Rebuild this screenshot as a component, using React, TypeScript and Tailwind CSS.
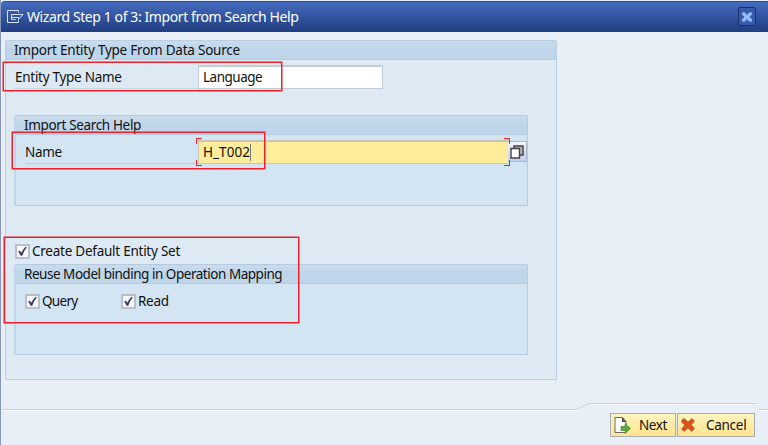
import React from "react";

function Check({ label, className = "" }: { label: string; className?: string }) {
  return (
    <label className={`flex h-[16px] items-center ${className}`}>
      <span className="mr-[2px] flex h-[15px] w-[15px] shrink-0 items-center justify-center border-2 border-[#b9c0c9] bg-[#f7f7fb]">
        <svg width="11" height="11" viewBox="0 0 11 11" className="shrink-0">
          <path d="M1.2 5.4 L3 4.8 L4.3 6.8 Q6 3 8.7 .8 L9.7 1.6 Q6.7 5 5.2 9.8 H3.6 Q2.5 7 1.2 5.4Z" fill="#3a3a5c" />
        </svg>
      </span>
      <span className="whitespace-nowrap">{label}</span>
    </label>
  );
}

function Group({ title, className = "", titleClass = "", children }: { title: string; className?: string; titleClass?: string; children: React.ReactNode }) {
  return (
    <section className={`ml-[8px] flex w-[514px] flex-col rounded-t-[2px] border border-l-2 border-[#b6cbe0] border-l-[#c3d5eb] bg-[#d3e5f3] ${className}`}>
      <h2 className={`flex h-[19px] shrink-0 items-center border-b border-[#b4cbe1] bg-linear-to-b from-[#cbdcec] to-[#bfd6ea] to-40% pl-[8px] ${titleClass}`}>{title}</h2>
      {children}
    </section>
  );
}

export default function App() {
  return (
    <div className="relative flex h-[445px] w-[768px] flex-col overflow-hidden border-l border-[#8796bc] bg-[#e8eff7] font-['Noto_Sans',sans-serif] text-[13.5px] leading-[18px] tracking-[-0.28px] text-[#111]">
      <header className="mt-px flex h-[31px] shrink-0 items-center rounded-tl-[4px] border-t border-b border-t-[#2c4c91] border-b-[#233e7a] bg-linear-to-b from-[#456cc0] to-[#213f82] pl-[6px] text-white">
        <svg width="17" height="13" viewBox="0 0 17 13" fill="none" stroke="#dbe4fa" strokeWidth="1">
          <path d="M11.5 2.5V.5H.5v12h11v-2M11.5 4.5H16L11.5 9.5V7.5H4.5M11.5 4.5H4.5v5h4" />
        </svg>
        <h1 className="ml-[3px] text-[14px] tracking-[-0.41px] whitespace-nowrap">Wizard Step 1 of 3: Import from Search Help</h1>
        <button className="mr-[12px] ml-auto flex h-[19px] w-[18px] items-center justify-center rounded-[2px] border border-[#183269] bg-[#365ca9]">
          <svg width="10" height="10" viewBox="0 0 10 10"><path d="M0 .5h3l2 2.5 2-2.5h3v2L7.5 5 10 7.5v2H7L5 7 3 9.5H0v-2L2.5 5 0 2.5Z" fill="#96bcff" /></svg>
        </button>
      </header>
      <main className="mt-[8px] ml-[4px] flex h-[340px] w-[552px] shrink-0 flex-col rounded-t-[2px] border border-[#b8cee2] bg-[#deeaf3]">
        <h2 className="flex h-[19px] shrink-0 items-center border-b border-[#b5cce3] bg-linear-to-b from-[#cbdcec] to-[#bfd6ea] to-40% pl-[8px] tracking-[-0.23px]">Import Entity Type From Data Source</h2>
        <div className="mt-[5px] flex h-[24px] shrink-0">
          <span className="ml-[9px] flex w-[183px] items-center border-b border-[#ccd9e5]">Entity Type Name</span>
          <span className="flex w-[185px] items-center border border-t-2 border-[#c2ccd5] bg-white pb-px pl-[4px] tracking-[-0.5px]">Language</span>
        </div>
        <Group title="Import Search Help" titleClass="tracking-[-0.35px]" className="mt-[26px] h-[91px] shrink-0">
          <div className="mt-[5px] flex h-[24px] shrink-0">
            <span className="ml-[9px] flex w-[173px] items-center border-b border-[#bccddd]">Name</span>
            <span className="relative flex w-[310px] items-center border-t-2 border-b border-l border-[#c6c6b7] bg-[#ffed9b] pb-px pl-[4px] tracking-[0.05px]">
              H_T002<i className="h-[17px] w-px bg-[#777]" />
              <i className="absolute -top-[4px] -left-[3px] h-[6px] w-[6px] border-t border-l border-[#ec2028]" />
              <i className="absolute -bottom-[3px] -left-[3px] h-[6px] w-[6px] border-b border-l border-[#ec2028]" />
              <i className="absolute -top-[4px] -right-[2px] z-10 h-[6px] w-[6px] border-t border-r border-[#ec2028]" />
              <i className="absolute -right-[2px] -bottom-[3px] z-10 h-[6px] w-[6px] border-r border-b border-[#ec2028]" />
            </span>
            <button className="mt-px flex h-[21px] w-[19px] items-center justify-center border border-l-0 border-[#b0b7c7] bg-linear-to-b from-[#f2f5fc] to-[#bfd0f2]">
              <svg width="14" height="14" viewBox="0 0 14 14" fill="#fff" stroke="#45413c" strokeWidth="1.4"><path d="M4 1h9v9H4z" fill="#bbb" /><path d="M1 3.5h8.5V13H1z" /></svg>
            </button>
          </div>
        </Group>
        <Check label="Create Default Entity Set" className="mt-[37px] ml-[9px] shrink-0 tracking-[-0.25px]" />
        <Group title="Reuse Model binding in Operation Mapping" titleClass="tracking-[-0.47px]" className="mt-[5px] h-[91px] shrink-0">
          <div className="mt-[9px] flex">
            <Check label="Query" className="ml-[9px] w-[96px] tracking-[-0.7px]" />
            <Check label="Read" />
          </div>
        </Group>
      </main>
      <footer className="mt-[22px] flex h-[43px] shrink-0 flex-col">
        <svg width="767" height="9" viewBox="1 0 767 9" fill="none" className="shrink-0">
          <path d="M2 8.5H576Q581 8 584 5Q587 2.5 592 2.5H757M759 8.5H768" stroke="#fafcfe" />
          <path d="M2 7.5H576Q579 7 583 4.5Q587 1.5 592 1.5H757M759 7.5H768" stroke="#c8cfdd" />
        </svg>
        <div className="mt-[2px] mr-[13px] flex justify-end gap-px">
          <button className="flex h-[24px] w-[66px] items-center border border-[#a9adb0] bg-linear-to-b from-[#fff4c1] to-[#ffe58c] pl-[3px]">
            <svg width="17" height="18" viewBox="0 0 17 18"><path d="M1 1.5h7.5l3.5 4v11H1z" fill="#fff" stroke="#666" /><path d="M8 1v5h4.5z" fill="#555" /><path d="M7 10.5h4V7.5l5.5 5-5.5 5v-3H7z" fill="#5aae38" stroke="#397b21" strokeWidth=".6" /></svg>
            <span className="ml-[8px] tracking-[-0.45px]">Next</span>
          </button>
          <button className="flex h-[24px] w-[78px] items-center border border-[#a9adb0] bg-linear-to-b from-[#fff4c1] to-[#ffe58c] pl-[3px]">
            <svg width="14" height="14" viewBox="0 0 14 14"><path d="M1 2 3 .5 7 4 11 .5 13.5 3 10 7l3.5 3-2.5 3.5L7 10l-4 3.5L.5 11 4 7 .5 4Z" fill="#dc5219" stroke="#a7441f" strokeWidth=".6" /></svg>
            <span className="ml-[11px]">Cancel</span>
          </button>
        </div>
      </footer>
      <i className="absolute top-[62px] left-[2px] h-[29px] w-[279px] border border-[#ed2028] shadow-[0_0_0_0.5px_#ed2028]" />
      <i className="absolute top-[132px] left-[11px] h-[37px] w-[253px] border border-[#ed2028] shadow-[0_0_0_0.5px_#ed2028]" />
      <i className="absolute top-[237px] left-[3px] h-[86px] w-[295px] border border-[#ed2028] shadow-[0_0_0_0.5px_#ed2028]" />
    </div>
  );
}
